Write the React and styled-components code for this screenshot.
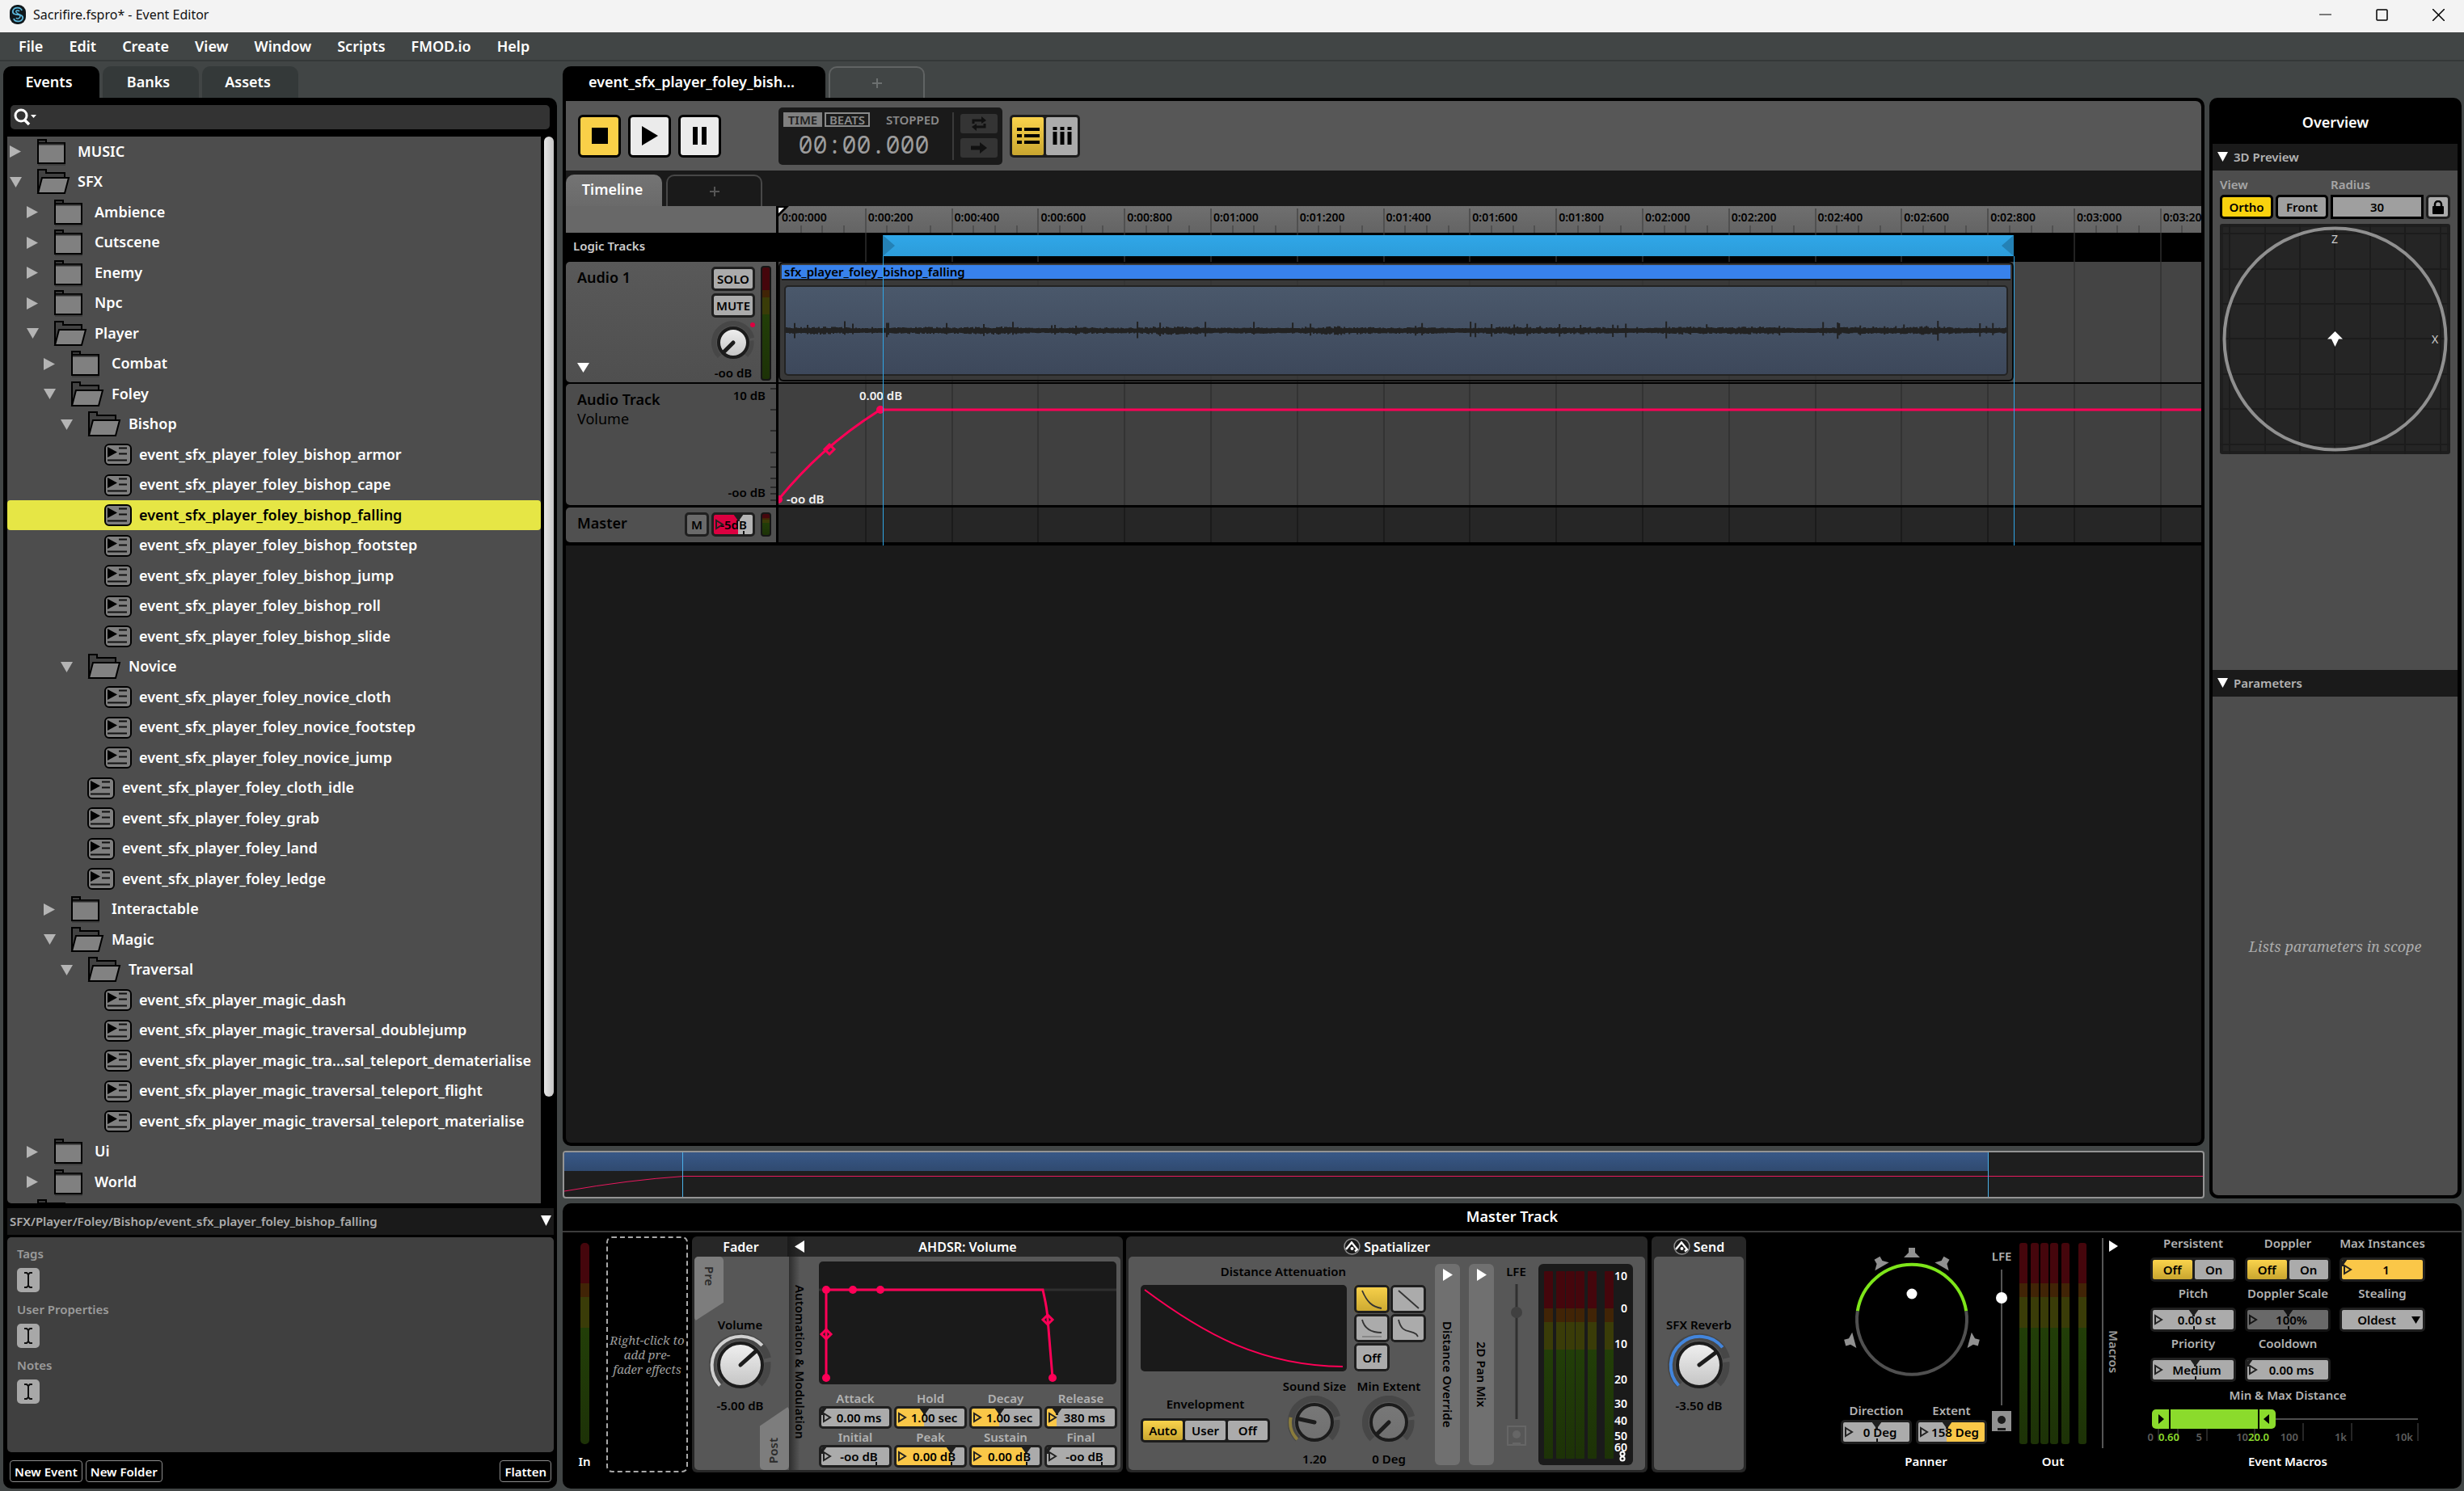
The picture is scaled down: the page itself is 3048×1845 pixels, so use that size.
import React, { useId } from "react";
import styled, { createGlobalStyle, css } from "styled-components";

const sans = `"Noto Sans", "Open Sans", sans-serif`;
const italicSerif = `"Noto Serif", "Droid Serif", "Liberation Serif", serif`;
const mono = `"Droid Sans Mono", "Noto Sans Mono", "Liberation Mono", monospace`;

const c = {
  chrome: "#414545",
  black: "#000",
  well: "#1a1a1a",
  module: "#272727",
  body: "#575757",
  panel: "#4d4d4d",
  key: "#ababab",
  amber: "#fac748",
  pink: "#ff0057",
  blue: "#2fa4e4",
};
const amberKey = "linear-gradient(#fad34c, #c9a62f)";

const Global = createGlobalStyle`
  *, *::before, *::after { box-sizing: border-box; }
  body { margin: 0; background: ${c.chrome}; }
  button, input, select { font: inherit; color: inherit; margin: 0; padding: 0; border: 0; background: none; border-radius: 0; }
  ul { list-style: none; margin: 0; padding: 0; }
  svg { display: block; flex: none; }
  h1, h2, h3, p { margin: 0; font: inherit; }
`;

const Shell = styled.div`
  height: 100vh;
  display: flex;
  flex-direction: column;
  overflow: hidden;
  background: ${c.chrome};
  color: #fff;
  font: 600 18px/24px ${sans};
`;

/* ---------- window chrome ---------- */

const TitleBar = styled.header`
  height: 40px;
  display: flex;
  align-items: center;
  gap: 9px;
  padding: 0 0 4px 12px;
  background: #f3f3f3;
  color: #111;
  font-weight: 400;
  font-size: 16px;
`;
const WindowTitle = styled.h1`flex: 1;`;
const WindowButtons = styled.div`
  display: flex;
  gap: 6px;
`;
const WindowButton = styled.button`
  width: 64px;
  height: 36px;
  display: flex;
  align-items: center;
  justify-content: center;
`;
const MenuBar = styled.nav`
  height: 36px;
  display: flex;
  align-items: center;
  gap: 32px;
  padding-left: 23px;
  border-bottom: 2px solid #343838;
`;
const Workspace = styled.main`
  flex: 1;
  min-height: 0;
  display: flex;
  gap: 7px;
  padding: 6px 3px 3px 4px;
`;

/* ---------- shared parts ---------- */

const Column = styled.div`
  display: flex;
  flex-direction: column;
  min-width: 0;
  min-height: 0;
  flex: ${(p) => (p.$grow ? 1 : "none")};
  width: ${(p) => p.$width || "auto"};
`;
const TabRow = styled.div`
  height: 39px;
  display: flex;
  gap: 4px;
`;
const Tab = styled.button`
  width: ${(p) => p.$width || "119px"};
  padding: 0 6px 2px 0;
  border-radius: 10px 10px 0 0;
  background: ${(p) => (p.$on ? c.black : "#343939")};
`;
const AddTab = styled.button`
  width: 119px;
  border: 2px solid ${(p) => p.$edge || "#606363"};
  border-bottom: 0;
  border-radius: 10px 10px 0 0;
  display: flex;
  align-items: center;
  justify-content: center;
`;
const Panel = styled.section`
  background: ${c.black};
  border-radius: ${(p) => p.$radius || "10px"};
  display: flex;
  flex-direction: column;
  min-height: 0;
  flex: ${(p) => (p.$grow ? 1 : "none")};
`;

/* ---------- browser ---------- */

const SearchBox = styled.label`
  height: 30px;
  margin: 9px;
  padding-left: 4px;
  display: flex;
  align-items: center;
  background: #333;
  border-radius: 5px;
  input { flex: 1; outline: 0; }
`;
const TreeFrame = styled.div`
  flex: 1;
  min-height: 0;
  display: flex;
  gap: 4px;
  padding: 0 4px 0 5px;
`;
const Tree = styled.ul`
  flex: 1;
  overflow: hidden;
  background: ${c.panel};
  border-bottom-left-radius: 5px;
  display: grid;
  grid-auto-rows: 37px 38px;
  align-content: start;
`;
const TreeRow = styled.button`
  width: 100%;
  height: 100%;
  padding-left: ${(p) => 3 + p.$depth * 21}px;
  display: flex;
  align-items: center;
  border-radius: 4px;
  text-align: left;
  white-space: nowrap;
  background: ${(p) => (p.$selected ? "#e6e645" : "none")};
  color: ${(p) => (p.$selected ? "#000" : "#fff")};
`;
const Twisty = styled.span`width: 33px;`;
const IconSlot = styled.span`width: ${(p) => (p.$event ? 43 : 51)}px;`;
const TreeName = styled.span`padding-bottom: 2px;`;
const ScrollTrack = styled.div`width: 12px;`;
const ScrollThumb = styled.div`
  height: 90%;
  border-radius: 6px;
  background: linear-gradient(90deg, #e6e6e6, #c6c6c6);
`;
const PathBar = styled.div`
  height: 33px;
  margin: 6px 4px 3px 5px;
  padding: 0 3px 2px;
  display: flex;
  align-items: center;
  justify-content: space-between;
  background: ${c.well};
  color: #acacac;
  font-size: 15px;
`;
const Properties = styled.div`
  height: 266px;
  margin: 0 4px 0 5px;
  padding: 10px 12px;
  display: flex;
  flex-direction: column;
  align-items: flex-start;
  border-radius: 5px;
  background: #404040;
  color: #9b9b9b;
  font-size: 15px;
  line-height: 20px;
`;
const TextCursorButton = styled.button`
  width: 28px;
  height: 30px;
  margin: 8px 0 11px;
  display: flex;
  align-items: center;
  justify-content: center;
  border-radius: 5px;
  background: #a8a8a8;
`;
const BrowserFooter = styled.div`
  display: flex;
  gap: 4px;
  padding: 10px 7px 8px 8px;
`;
const OutlineButton = styled.button`
  height: 27px;
  padding: 0 5px;
  margin-left: ${(p) => (p.$end ? "auto" : 0)};
  border: 1px solid #8c8c8c;
  border-radius: 4px;
  font-size: 15px;
  line-height: 20px;
`;

/* ---------- transport ---------- */

const Toolbar = styled.div`
  height: 86px;
  padding-left: 15px;
  display: flex;
  align-items: center;
  gap: 9px;
  background: ${c.body};
  border-top-right-radius: 7px;
`;
const Transport = styled.div`
  width: 239px;
  display: flex;
  gap: 9px;
`;
const TransportButton = styled.button`
  width: 53px;
  height: 53px;
  display: flex;
  align-items: center;
  justify-content: center;
  border: 3px solid #000;
  border-radius: 6px;
  background: ${(p) => (p.$on ? "#f9d048" : "#ebebeb")};
`;
const TimeDisplay = styled.div`
  width: 277px;
  height: 71px;
  padding: 6px;
  display: flex;
  gap: 8px;
  border-radius: 5px;
  background: ${c.well};
  color: #8a8a8a;
`;
const TimeMain = styled.div`
  flex: 1;
  display: flex;
  flex-direction: column;
  border-right: 2px solid #3a3a3a;
`;
const TimeModes = styled.div`
  display: flex;
  gap: 3px;
  font-size: 15px;
  line-height: 18px;
`;
const TimeMode = styled.button`
  height: 18px;
  width: ${(p) => (p.$on ? 48 : 56)}px;
  line-height: ${(p) => (p.$on ? 18 : 14)}px;
  border: ${(p) => (p.$on ? 0 : "2px solid #8a8a8a")};
  background: ${(p) => (p.$on ? "#808080" : "none")};
  color: ${(p) => (p.$on ? "#222" : "inherit")};
`;
const TimeState = styled.span`
  flex: 1;
  padding-right: 16px;
  text-align: right;
`;
const Clock = styled.div`
  padding: 6px 10px 0 0;
  text-align: center;
  color: #9c9c9c;
  font: 400 30px/32px ${mono};
`;
const TimeSide = styled.div`
  width: 46px;
  padding: 2px 0;
  display: flex;
  flex-direction: column;
  gap: 6px;
`;
const DimButton = styled.button`
  height: 24px;
  display: flex;
  align-items: center;
  justify-content: center;
  border-radius: 3px;
  background: #343434;
`;

const KeyGroup = styled.div`
  display: grid;
  grid-template-columns: ${(p) => p.$cols};
  grid-auto-rows: ${(p) => p.$rows || "auto"};
  gap: 3px;
  padding: 3px;
  border-radius: 5px;
  background: #1c1c1c;
  color: #000;
  font-size: 15px;
  line-height: 20px;
`;
const Key = styled.button`
  display: flex;
  align-items: center;
  justify-content: center;
  border-radius: 2px;
  background: ${(p) => (p.$on ? amberKey : c.key)};
`;

/* ---------- timeline ---------- */

const EditorInner = styled.div`
  flex: 1;
  min-height: 0;
  display: flex;
  flex-direction: column;
  padding: 4px;
`;
const SheetTabs = styled.div`
  height: 44px;
  padding-top: 5px;
  display: flex;
  gap: 5px;
  background: ${c.well};
`;
const SheetTab = styled.button`
  width: 119px;
  padding: 0 4px 4px 0;
  border-radius: 10px 10px 0 0;
  background: linear-gradient(#747474, #6a6a6a);
`;
const Tracks = styled.div`
  position: relative;
  display: flex;
  flex-direction: column;
`;
const TrackRow = styled.div`
  display: grid;
  grid-template-columns: 260px 1fr;
  column-gap: 3px;
  height: ${(p) => p.$height};
  margin-bottom: ${(p) => p.$gap || 0};
`;
const Lane = styled.div`
  position: relative;
  overflow: ${(p) => (p.$clip ? "hidden" : "visible")};
  background: ${(p) => p.$bg};
`;
const GridLine = styled.i`
  position: absolute;
  top: ${(p) => (p.$minor ? "24px" : p.$inset || 0)};
  bottom: 0;
  width: 2px;
  background: ${(p) => p.$color};
`;
const RulerLabel = styled.span`
  position: absolute;
  top: 4px;
  padding-left: 4px;
  color: #000;
  font-size: 14px;
  line-height: 20px;
`;
const PlayheadMark = styled.svg`
  position: absolute;
  left: 0;
  top: 0;
`;
const RulerHead = styled.div`background: #686868;`;
const TrackHead = styled.div`
  position: relative;
  display: flex;
  justify-content: space-between;
  padding: 0 6px 0 14px;
  background: ${(p) => p.$bg};
  border-radius: 5px 0 0 5px;
  color: #000;
`;
const TrackTitle = styled.div`
  display: flex;
  flex-direction: column;
  justify-content: ${(p) => p.$justify || "flex-start"};
  padding: 7px 0 12px;
`;
const Light = styled.span`font-weight: 400;`;
const LogicHead = styled.div`
  padding: 6px 9px;
  color: #ccc;
  font-size: 15px;
  line-height: 20px;
`;
const HeadControls = styled.div`
  display: flex;
  gap: 7px;
`;
const HeadStack = styled.div`
  width: 54px;
  display: flex;
  flex-direction: column;
  gap: 3px;
  padding-top: 6px;
  color: #000;
  text-align: center;
  font-size: 15px;
  line-height: 20px;
`;
const BoxButton = styled.button`
  height: 30px;
  width: ${(p) => p.$width || "auto"};
  border: 3px solid #1f1f1f;
  border-radius: 5px;
  background: ${(p) => p.$bg || c.key};
  color: #000;
  font-size: 15px;
  line-height: 20px;
  display: flex;
  align-items: center;
  justify-content: center;
`;
const TrackKnob = styled.div`
  position: relative;
  height: 52px;
  padding-top: 1px;
  display: flex;
  justify-content: center;
  input { position: absolute; inset: 0; width: 100%; opacity: 0; }
  &::after {
    content: "";
    position: absolute;
    right: 0;
    top: 3px;
    width: 6px;
    height: 6px;
    border-radius: 50%;
    background: #dc0040;
  }
`;
const MeterSlot = styled.div`
  height: 100%;
  padding: 5px 0 2px;
`;
const MasterControls = styled.div`
  display: grid;
  grid-template-columns: 30px 54px 17px;
  column-gap: 3px;
  padding-top: 6px;
  font-size: 15px;
  justify-items: end;
`;
const Meter = styled.div`
  width: ${(p) => p.$w || "11px"};
  height: ${(p) => p.$h || "100%"};
  border: ${(p) => (p.$framed ? "2px solid #161616" : 0)};
  border-radius: ${(p) => p.$radius || "3px"};
  background: linear-gradient(
    #45060c 0 20%,
    #412406 20% 27%,
    #3a3c08 27% 42%,
    #223e08 42%,
    #1d3207 100%
  );
`;
const DecibelScale = styled.div`
  display: flex;
  flex-direction: column;
  justify-content: space-between;
  padding: 4px 7px 6px 0;
  text-align: right;
  font-size: 15px;
  line-height: 20px;
`;
const ScaleTicks = styled.svg`
  position: absolute;
  right: 0;
  top: 0;
`;

const RegionBar = styled.div`
  position: absolute;
  top: 3px;
  height: 26px;
  display: flex;
  justify-content: space-between;
  background: linear-gradient(#30a7e8, #2c9cda);
`;
const RegionEdge = styled.i`
  position: absolute;
  top: 62px;
  bottom: 0;
  width: 1px;
  background: ${c.blue};
`;
const LaneOverlay = styled.div`
  position: absolute;
  inset: 0 0 0 263px;
  pointer-events: none;
`;
const Clip = styled.div`
  position: relative;
  height: 148px;
  padding: 2px;
  border: 2px solid #080808;
  border-radius: 6px;
  background: rgba(52, 52, 52, 0.7);
`;
const ClipTitle = styled.div`
  height: 19px;
  padding-left: 3px;
  border-bottom: 2px solid #1b1b1b;
  background: #3882ec;
  color: #000;
  font-size: 15px;
  line-height: 17px;
`;
const Wave = styled.div`
  height: 112px;
  margin: 6px 3px 0;
  border: 2px solid #232323;
  border-radius: 5px;
  background: linear-gradient(#4a586b, #3d485b);
  svg { width: 100%; height: 100%; }
`;
const CurveSvg = styled.svg`
  position: absolute;
  inset: 0;
  width: 100%;
  height: 100%;
`;
const PointLabel = styled.span`
  position: absolute;
  left: ${(p) => p.$x};
  top: ${(p) => p.$y};
  font-size: 15px;
  line-height: 16px;
  color: #f2f2f2;
`;
const EmptyTracks = styled.div`
  flex: 1;
  background: ${c.well};
  border-radius: 0 0 6px 6px;
`;
const MiniMap = styled.div`
  height: 59px;
  margin: 6px 0;
  position: relative;
  overflow: hidden;
  border: 2px solid #949494;
  border-radius: 4px;
  background: #1e1e1e;
`;
const MiniClip = styled.div`
  height: 23px;
  background: linear-gradient(#385887, #304a70);
`;
const MiniEdge = styled.i`
  position: absolute;
  top: 0;
  bottom: 0;
  width: 1px;
  background: #4bb0e8;
`;

/* ---------- overview ---------- */

const OverviewColumn = styled.div`
  width: 312px;
  padding: 39px 0 6px;
  display: flex;
  flex-direction: column;
`;
const PanelTitle = styled.h2`
  padding: 18px 0 15px;
  text-align: center;
  line-height: 24px;
`;
const SectionHead = styled.button`
  height: 33px;
  padding: 0 6px 1px;
  display: flex;
  align-items: center;
  gap: 7px;
  background: ${c.well};
  color: #b4b4b4;
  font-size: 15px;
  line-height: 20px;
`;
const OverviewBody = styled.div`
  margin: 0 5px 4px 4px;
  flex: 1;
  display: flex;
  flex-direction: column;
`;
const PreviewArea = styled.div`
  height: 618px;
  padding: 7px 9px;
  background: ${c.panel};
  color: #a6a6a6;
  font-size: 15px;
  line-height: 20px;
`;
const ViewGrid = styled.div`
  display: grid;
  grid-template-columns: 66px 65px 1fr 30px;
  gap: 3px;
  margin-bottom: 6px;
  align-items: center;
`;
const Caption = styled.label`grid-column: ${(p) => p.$col};`;
const SquareButton = styled(BoxButton)`
  border-color: #000;
  background: ${(p) => (p.$on ? "#f9d20e" : "#9f9f9f")};
`;
const RadiusInput = styled.input`
  width: 100%;
  height: 30px;
  border: 3px solid #000;
  background: #9f9f9f;
  color: #000;
  text-align: center;
`;
const EmptyNote = styled.div`
  flex: 1;
  display: flex;
  align-items: center;
  justify-content: center;
  background: ${c.panel};
  border-radius: 0 0 7px 7px;
  color: #ababab;
  font: italic 400 18px/24px ${italicSerif};
`;

/* ---------- effect deck ---------- */

const DeckTitle = styled.h2`
  height: 36px;
  border-bottom: 2px solid #3c3c3c;
  text-align: center;
  line-height: 33px;
`;
const Deck = styled.div`
  display: flex;
  padding: 3px 45px 20px 0;
  height: 317px;
  font-size: 15px;
  line-height: 20px;
`;
const Strip = styled.div`
  width: ${(p) => p.$w};
  margin-left: ${(p) => p.$ml || 0};
  padding-bottom: 4px;
  display: flex;
  flex-direction: column;
  align-items: center;
  justify-content: space-between;
`;
const Meters = styled.div`
  height: 259px;
  padding-top: 10px;
  display: flex;
`;
const MeterPair = styled.div`
  display: flex;
  gap: ${(p) => p.$gap || "3px"};
`;
const DropBox = styled.div`
  width: 101px;
  margin-top: 2px;
  display: flex;
  align-items: center;
  justify-content: center;
  border: 2px dashed #a8a8a8;
  border-radius: 7px;
  color: #9c9c9c;
  text-align: center;
  white-space: nowrap;
  font: italic 400 15px/18px ${italicSerif};
`;
const Module = styled.section`
  width: ${(p) => p.$w};
  margin: 2px 0 0 ${(p) => p.$ml};
  padding: 0 3px 3px;
  display: flex;
  flex-direction: column;
  border-radius: 6px;
  background: ${c.module};
`;
const ModuleHead = styled.h3`
  height: 25px;
  flex: none;
  display: flex;
  align-items: center;
  justify-content: center;
  gap: 4px;
  font-size: 16px;
  width: ${(p) => p.$w || "auto"};
`;
const ModuleHeads = styled.div`
  display: flex;
  height: 25px;
`;
const FoldHead = styled.button`
  width: 38px;
  display: flex;
  align-items: center;
  padding-left: 9px;
  background: linear-gradient(90deg, #1a1a1a, ${c.module} 40%);
`;
const ModuleBody = styled.div`
  flex: 1;
  display: flex;
  border-radius: 5px;
  background: ${c.body};
  color: #000;
`;
const FaderBody = styled.div`
  width: 117px;
  display: grid;
  grid-template-columns: 36px 1fr 36px;
  grid-template-rows: 80px 1fr 79px;
`;
const SlantTag = styled.button`
  grid-row: ${(p) => (p.$post ? 3 : 1)};
  grid-column: ${(p) => (p.$post ? 3 : 1)};
  padding: ${(p) => (p.$post ? "0 4px 8px 0" : "12px 0 0 2px")};
  display: flex;
  align-items: ${(p) => (p.$post ? "flex-end" : "flex-start")};
  justify-content: center;
  border-radius: 5px;
  background: #7d7d7d;
  color: #2b2b2b;
  clip-path: ${(p) =>
    p.$post
      ? "polygon(0 31%, 100% 0, 100% 100%, 0 100%)"
      : "polygon(0 0, 100% 0, 100% 71%, 0 100%)"};
`;
const FaderKnob = styled.div`
  grid-row: 1 / 4;
  grid-column: 1 / 4;
  align-self: start;
  padding-top: 74px;
  margin-right: 4px;
  position: relative;
`;
const SendKnob = styled.div`
  flex: 1;
  padding-top: 74px;
`;
const Vertical = styled.span`
  writing-mode: vertical-rl;
  line-height: 20px;
  white-space: nowrap;
  ${(p) => p.$up && css`transform: rotate(180deg);`}
`;
const ModStrip = styled.div`
  width: 34px;
  display: flex;
  align-items: center;
  background: linear-gradient(90deg, #2e2e2e, ${c.body} 40%);
  padding: 0 0 4px 4px;
`;
const Adsr = styled.div`
  flex: 1;
  padding: 6px 4px 0 3px;
`;
const FieldGrid = styled.div`
  display: grid;
  grid-template-columns: repeat(4, 1fr);
  column-gap: 3px;
  padding-top: 7px;
`;
const FieldBox = styled.div`
  display: flex;
  flex-direction: column;
  gap: ${(p) => p.$gap || 0};
  text-align: center;
  color: #b2b2b2;
`;
const FieldFrame = styled.div`
  position: relative;
  height: ${(p) => p.$h || "28px"};
  display: flex;
  align-items: center;
  border: 3px solid #1f1f1f;
  border-radius: 5px;
  padding-left: 1px;
  opacity: ${(p) => (p.$dim ? 0.6 : 1)};
  background: ${(p) =>
    `linear-gradient(90deg, ${p.$base} ${p.$from}%, ${p.$tint} ${p.$from}% ${p.$to}%, ${p.$base} ${p.$to}%)`};
  color: #000;
  overflow: hidden;
  input {
    position: relative;
    min-width: 0;
    width: 100%;
    padding-left: ${(p) => (p.$tight ? 0 : "8px")};
    text-align: center;
  }
  svg:first-child {
    position: absolute;
    left: 1px;
  }
`;
const Notch = styled.svg`
  position: absolute;
  top: -1px;
  width: 13px;
  margin-left: -6px;
`;
const FieldTick = styled.i`
  position: absolute;
  bottom: 0;
  width: 2px;
  height: 4px;
  background: #111;
`;
const KnobBox = styled.label`
  position: relative;
  display: flex;
  flex-direction: column;
  align-items: center;
  gap: ${(p) => p.$gap || "3px"};
  color: #000;
  input {
    position: absolute;
    inset: 0;
    width: 100%;
    height: 100%;
    opacity: 0;
  }
`;
const SpatialBody = styled.div`
  flex: 1;
  display: flex;
  padding: 8px 15px 4px;
`;
const SpatialMain = styled.div`
  width: 353px;
  margin-right: 11px;
  text-align: center;
`;
const AttenuationRow = styled.div`
  display: flex;
  gap: 9px;
  padding: 7px 0 8px;
  align-items: flex-start;
`;
const AttenuationKeys = styled.div`
  display: grid;
  grid-template-columns: 44px 44px;
  grid-template-rows: 35px 35px 35px;
  gap: 1px;
`;
const CurveKey = styled.button`
  display: flex;
  align-items: center;
  justify-content: center;
  outline: 3px solid #1f1f1f;
  outline-offset: -3px;
  border-radius: 5px;
  background: ${(p) => (p.$on ? amberKey : c.key)};
`;
const EnvelopRow = styled.div`
  display: grid;
  grid-template-columns: 169px 92px 92px;
`;
const Envelopment = styled.div`
  padding: 22px 9px 0 0;
  display: flex;
  flex-direction: column;
  gap: 8px;
`;
const FoldBar = styled.button`
  width: 31px;
  height: 249px;
  margin: 1px ${(p) => (p.$last ? 0 : "11px")} 0 0;
  padding-top: 6px;
  display: flex;
  flex-direction: column;
  align-items: center;
  border-radius: 6px;
  background: #707070;
`;
const FoldText = styled.div`
  flex: 1;
  display: flex;
  align-items: center;
  padding-top: 4px;
`;
const LfeColumn = styled.label`
  position: relative;
  width: ${(p) => p.$w};
  display: flex;
  flex-direction: column;
  align-items: center;
  color: ${(p) => p.$color};
  padding-top: ${(p) => p.$top || 0};
  input {
    position: absolute;
    inset: 20px 0 30px;
    width: 100%;
    opacity: 0;
  }
`;
const MeterWell = styled.div`
  width: 117px;
  height: 249px;
  margin-top: 1px;
  padding: 9px 7px 7px;
  display: flex;
  justify-content: space-between;
  border-radius: 6px;
  background: ${c.well};
`;
const MeterScale = styled.div`
  position: relative;
  width: 20px;
  color: #fff;
  font-size: 14px;
  line-height: 16px;
`;
const ScaleValue = styled.span`
  position: absolute;
  right: 0;
  margin-top: -9px;
`;
const InfinityMark = styled.svg`
  position: absolute;
  right: 1px;
  bottom: -3px;
`;
const PannerRow = styled.div`
  display: flex;
  gap: 6px;
`;
const PannerMain = styled.div`width: 181px;`;
const PannerFields = styled.div`
  display: grid;
  grid-template-columns: 1fr 1fr;
  gap: 5px;
`;
const MacroFold = styled.button`
  width: 26px;
  height: 260px;
  margin: 4px 0 0 18px;
  padding: 3px 0 0 1px;
  display: flex;
  flex-direction: column;
  align-items: center;
  border-left: 2px solid #555;
  color: #9b9b9b;
`;
const Macros = styled.div`
  width: 340px;
  margin-left: 34px;
  padding-bottom: 4px;
  display: flex;
  flex-direction: column;
  text-align: center;
`;
const MacroGrid = styled.div`
  display: grid;
  grid-template-columns: repeat(3, 1fr);
  gap: 4px 11px;
  color: #b2b2b2;
`;
const StealingSelect = styled.span`
  position: relative;
  height: 30px;
  border: 3px solid #1f1f1f;
  border-radius: 5px;
  background: ${c.key};
  color: #000;
  display: flex;
  align-items: center;
  padding-right: 3px;
  select {
    flex: 1;
    min-width: 0;
    appearance: none;
    outline: 0;
    text-align: center;
    text-align-last: center;
  }
`;
const RangeArea = styled.div`
  padding-top: 6px;
  margin-bottom: auto;
  color: #b2b2b2;
`;
const RangeSvg = styled.svg`
  width: 100%;
  margin-top: 8px;
  overflow: visible;
`;
const Legend = styled.div`color: #fff;`;

/* ---------- icons ---------- */

const TriDown = ({ w = 14, h = 12, fill = "#fff" }) => (
  <svg width={w} height={h}><path d={`M0 0H${w}L${w / 2} ${h}Z`} fill={fill} /></svg>
);
const TriRight = ({ w = 12, h = 15, fill = "#fff" }) => (
  <svg width={w} height={h}><path d={`M0 0L${w} ${h / 2}L0 ${h}Z`} fill={fill} /></svg>
);
const TriLeft = () => (
  <svg width="12" height="15"><path d="M12 0V15L0 7.5Z" fill="#fff" /></svg>
);
const Plus = ({ color = "#6c7070" }) => (
  <svg width="12" height="12"><path d="M6 0V12M0 6H12" stroke={color} strokeWidth="2" /></svg>
);
const Folder = () => (
  <svg width="38" height="34" viewBox="0 0 38 34">
    <path d="M2 6V2H12V6" fill="#3a3a3a" stroke="#000" strokeWidth="2" />
    <path d="M2 6H35V31H2Z" fill="#808080" stroke="#000" strokeWidth="2" />
    <path d="M3 7.5H34" stroke="#2c2c2c" strokeWidth="2" />
    <path d="M2 33H36" stroke="#333" />
  </svg>
);
const FolderOpen = () => (
  <svg width="42" height="34" viewBox="0 0 42 34">
    <path d="M2 31V2H12V6H35V12" fill="#424242" stroke="#000" strokeWidth="2" />
    <path d="M7 12H40L35 31H2Z" fill="#828282" stroke="#000" strokeWidth="2" />
  </svg>
);
const EventIcon = () => (
  <svg width="34" height="27" viewBox="0 0 34 27">
    <rect x="1" y="1" width="32" height="25" rx="5" fill="#7f7f7f" stroke="#000" strokeWidth="2" />
    <path d="M4 4V17L16 10.5Z" fill="#000" />
    <path d="M18 5.5H28M18 12.5H28M4 20.5H28" stroke="#111" strokeWidth="2" />
  </svg>
);
const Logo = () => (
  <svg width="20" height="24" viewBox="0 0 20 24">
    <rect width="20" height="24" rx="9" fill="#10181c" />
    <path d="M15 7C14 3 6 2 4 7C3 11 6 12 10 12C14 12 17 14 16 17C14 22 6 21 5 17" fill="none" stroke="#5cb8dc" strokeWidth="1.8" />
    <path d="M12 8C10 6 7 7 8 9C9 11 13 11 13 14C13 17 9 18 8 16" fill="none" stroke="#5cb8dc" strokeWidth="1.5" />
  </svg>
);
const EffectIcon = () => (
  <svg width="21" height="21" viewBox="0 0 21 21">
    <circle cx="10.5" cy="10.5" r="9.5" fill="#1a1a1a" stroke="#8c8c8c" strokeWidth="1.5" />
    <path d="M3 14L10 5.5L17 14L14 16.5" fill="none" stroke="#fff" strokeWidth="2.4" />
    <circle cx="10.5" cy="13" r="2" fill="#fff" />
  </svg>
);
const PlayOutline = () => (
  <svg width="12" height="14"><path d="M2 2V12L10 7Z" fill="none" stroke="#222" strokeWidth="2" /></svg>
);
const NotchShape = () => <path d="M0 0H13L8 7V9H5V7Z" fill="#1f1f1f" />;
const LfeIcon = ({ box, dot, outlined }) => (
  <svg width="24" height="25">
    <rect x="1" y="1" width="22" height="23" fill={outlined ? "none" : box} stroke={box} strokeWidth="2" />
    <circle cx="12" cy="11" r="5" fill={dot} />
    <path d="M7 22.5H17" stroke={dot} strokeWidth="3" />
  </svg>
);

/* ---------- small composites ---------- */

const polar = (cx, cy, r, deg) => {
  const a = ((deg - 90) * Math.PI) / 180;
  return `${(cx + r * Math.cos(a)).toFixed(1)} ${(cy + r * Math.sin(a)).toFixed(1)}`;
};
const arc = (cx, cy, r, from, to) =>
  `M${polar(cx, cy, r, from)}A${r} ${r} 0 ${to - from > 180 ? 1 : 0} 1 ${polar(cx, cy, r, to)}`;

function Dial({ r, track, angle, tint, flat }) {
  const s = (r + track + 3) * 2;
  const m = s / 2;
  const id = useId();
  return (
    <svg width={s} height={s}>
      <defs>
        <linearGradient id={id} x2="0" y2="1">
          <stop offset="0" stopColor={flat ? "#787878" : "#f0f0f0"} />
          <stop offset="1" stopColor={flat ? "#707070" : "#c4c4c4"} />
        </linearGradient>
      </defs>
      <path d={arc(m, m, r + 3 + track / 2, -135, 76)} fill="none" stroke="#474747" strokeWidth={track} />
      <path d={arc(m, m, r + 2 + track / 2, 84, 135)} fill="none" stroke="#474747" strokeWidth={track - 1} />
      {tint && <path d={arc(m, m, r + track, -135, angle)} fill="none" stroke={tint} strokeWidth="4" />}
      <circle cx={m} cy={m} r={r} fill={`url(#${id})`} stroke="#1c1c1c" strokeWidth="4" />
      <path d={`M${m} ${m}L${polar(m, m, r - 2, angle)}`} stroke="#1c1c1c" strokeWidth="5" strokeLinecap="round" />
    </svg>
  );
}

function Knob({ label, value, gap, ...dial }) {
  return (
    <KnobBox $gap={gap}>
      <span>{label}</span>
      <Dial {...dial} />
      <span>{value}</span>
      <input type="range" min="-135" max="135" defaultValue={dial.angle} aria-label={label} />
    </KnobBox>
  );
}

function Field({ label, value, from = 0, to = 0, notch, tick, gap, h, dim }) {
  const id = useId();
  return (
    <FieldBox $gap={gap}>
      <label htmlFor={id}>{label}</label>
      <FieldFrame $from={from} $to={to} $h={h} $base={dim ? "#b0b0b0" : c.key} $tint={c.amber} $dim={dim}>
        <PlayOutline />
        {notch !== undefined && (
          <Notch height="9" viewBox="0 0 13 9" style={{ left: `${notch}%` }}><NotchShape /></Notch>
        )}
        {tick !== undefined && <FieldTick style={{ left: `${tick}%` }} />}
        <input id={id} defaultValue={value} />
      </FieldFrame>
    </FieldBox>
  );
}

function OffOn({ label }) {
  return (
    <FieldBox $gap="8px">
      <span>{label}</span>
      <KeyGroup $cols="1fr 1fr" $rows="24px">
        <Key $on aria-pressed="true">Off</Key>
        <Key aria-pressed="false">On</Key>
      </KeyGroup>
    </FieldBox>
  );
}

/* ---------- browser data ---------- */

const tree = [
  [0, "closed", "MUSIC"],
  [0, "open", "SFX"],
  [1, "closed", "Ambience"],
  [1, "closed", "Cutscene"],
  [1, "closed", "Enemy"],
  [1, "closed", "Npc"],
  [1, "open", "Player"],
  [2, "closed", "Combat"],
  [2, "open", "Foley"],
  [3, "open", "Bishop"],
  [4, "event", "event_sfx_player_foley_bishop_armor"],
  [4, "event", "event_sfx_player_foley_bishop_cape"],
  [4, "event", "event_sfx_player_foley_bishop_falling"],
  [4, "event", "event_sfx_player_foley_bishop_footstep"],
  [4, "event", "event_sfx_player_foley_bishop_jump"],
  [4, "event", "event_sfx_player_foley_bishop_roll"],
  [4, "event", "event_sfx_player_foley_bishop_slide"],
  [3, "open", "Novice"],
  [4, "event", "event_sfx_player_foley_novice_cloth"],
  [4, "event", "event_sfx_player_foley_novice_footstep"],
  [4, "event", "event_sfx_player_foley_novice_jump"],
  [3, "event", "event_sfx_player_foley_cloth_idle"],
  [3, "event", "event_sfx_player_foley_grab"],
  [3, "event", "event_sfx_player_foley_land"],
  [3, "event", "event_sfx_player_foley_ledge"],
  [2, "closed", "Interactable"],
  [2, "open", "Magic"],
  [3, "open", "Traversal"],
  [4, "event", "event_sfx_player_magic_dash"],
  [4, "event", "event_sfx_player_magic_traversal_doublejump"],
  [4, "event", "event_sfx_player_magic_tra...sal_teleport_dematerialise"],
  [4, "event", "event_sfx_player_magic_traversal_teleport_flight"],
  [4, "event", "event_sfx_player_magic_traversal_teleport_materialise"],
  [1, "closed", "Ui"],
  [1, "closed", "World"],
  [0, "partial", ""],
];

function Browser() {
  return (
    <Column $width="685px">
      <TabRow>
        <Tab $on>Events</Tab>
        <Tab>Banks</Tab>
        <Tab>Assets</Tab>
      </TabRow>
      <Panel $grow $radius="0 10px 10px 10px">
        <SearchBox>
          <svg width="30" height="24" viewBox="0 0 30 24">
            <circle cx="9" cy="10" r="7" fill="none" stroke="#fff" strokeWidth="3" />
            <path d="M13 15L19 21" stroke="#fff" strokeWidth="3.5" />
            <path d="M21 9H28L24.5 13Z" fill="#fff" />
          </svg>
          <input type="text" aria-label="Search events" />
        </SearchBox>
        <TreeFrame>
          <Tree>
            {tree.map(([depth, kind, name], i) => (
              <li key={i}>
                <TreeRow $depth={depth} $selected={name === "event_sfx_player_foley_bishop_falling"} aria-label={name || "More"}>
                  <Twisty>
                    {kind === "closed" && <TriRight w={14} h={15} fill="#b4b4b4" />}
                    {kind === "open" && <TriDown w={15} h={13} fill="#b4b4b4" />}
                  </Twisty>
                  <IconSlot $event={kind === "event"}>
                    {kind === "event" ? <EventIcon /> : kind === "open" ? <FolderOpen /> : <Folder />}
                  </IconSlot>
                  <TreeName>{name}</TreeName>
                </TreeRow>
              </li>
            ))}
          </Tree>
          <ScrollTrack><ScrollThumb /></ScrollTrack>
        </TreeFrame>
        <PathBar>
          <span>SFX/Player/Foley/Bishop/event_sfx_player_foley_bishop_falling</span>
          <TriDown w={13} h={13} />
        </PathBar>
        <Properties>
          {["Tags", "User Properties", "Notes"].map((t) => (
            <React.Fragment key={t}>
              <span>{t}</span>
              <TextCursorButton aria-label={`Edit ${t}`}>
                <svg width="12" height="20">
                  <path d="M1 1H4L6 3L8 1H11M1 19H4L6 17L8 19H11M6 2V18" fill="none" stroke="#111" strokeWidth="2" />
                </svg>
              </TextCursorButton>
            </React.Fragment>
          ))}
        </Properties>
        <BrowserFooter>
          <OutlineButton>New Event</OutlineButton>
          <OutlineButton>New Folder</OutlineButton>
          <OutlineButton $end>Flatten</OutlineButton>
        </BrowserFooter>
      </Panel>
    </Column>
  );
}

/* ---------- timeline ---------- */

const span = 3296;
const at = (ms) => `${(ms / span) * 100}%`;
const region = { from: 241, to: 2862 };
const mini = { from: "7.2%", to: "86.9%" };
const majors = Array.from({ length: 17 }, (_, i) => i * 200);
const stamp = (ms) => `0:${String(Math.floor(ms / 1000)).padStart(2, "0")}:${String(ms % 1000).padStart(3, "0")}`;

const GridLines = ({ color }) =>
  majors.slice(1).map((ms) => <GridLine key={ms} $color={color} style={{ left: at(ms) }} />);

const wavePath = (() => {
  let seed = 7;
  const rnd = () => (seed = (seed * 16807) % 2147483647) / 2147483647;
  let d = "";
  for (let x = 0; x < 1510; x += 2) {
    const swell = 1 + 0.8 * Math.sin(x / 61) * Math.sin(x / 23);
    const spike = rnd() > 0.92 ? rnd() * 8 : 0;
    const up = 2.6 + rnd() * 1.6 * swell + spike;
    const down = 2.6 + rnd() * 1.6 * swell + spike * rnd();
    d += `M${x} ${(54 - up).toFixed(1)}h2V${(54 + down).toFixed(1)}h-2Z`;
  }
  return d;
})();

function Editor() {
  return (
    <Column $grow>
      <TabRow>
        <Tab $on $width="325px">event_sfx_player_foley_bish...</Tab>
        <AddTab aria-label="New tab"><Plus /></AddTab>
      </TabRow>
      <Panel $grow $radius="0 10px 10px 10px">
        <EditorInner>
          <Toolbar>
            <Transport>
              <TransportButton $on aria-label="Stop"><svg width="20" height="20"><path d="M0 0H20V20H0Z" /></svg></TransportButton>
              <TransportButton aria-label="Play"><TriRight w={20} h={24} fill="#000" /></TransportButton>
              <TransportButton aria-label="Pause"><svg width="18" height="22"><path d="M0 0H6V22H0ZM11 0H17V22H11Z" /></svg></TransportButton>
            </Transport>
            <TimeDisplay>
              <TimeMain>
                <TimeModes>
                  <TimeMode $on>TIME</TimeMode>
                  <TimeMode>BEATS</TimeMode>
                  <TimeState>STOPPED</TimeState>
                </TimeModes>
                <Clock>00:00.000</Clock>
              </TimeMain>
              <TimeSide>
                <DimButton aria-label="Loop">
                  <svg width="18" height="18" viewBox="0 0 18 18">
                    <path d="M2 9V5H13M16 9V13H5" fill="none" stroke="#111" strokeWidth="3" />
                    <path d="M12 0L18 5L12 9ZM6 9L0 13L6 18Z" fill="#111" />
                  </svg>
                </DimButton>
                <DimButton aria-label="Follow playback">
                  <svg width="20" height="14"><path d="M0 4.5H11V0L20 7L11 14V9.5H0Z" fill="#111" /></svg>
                </DimButton>
              </TimeSide>
            </TimeDisplay>
            <KeyGroup $cols="39px 39px" $rows="47px">
              <Key $on aria-label="List view">
                <svg width="28" height="20"><path d="M0 2H6M9 2H28M0 10H6M9 10H28M0 18H6M9 18H28" stroke="#000" strokeWidth="4" /></svg>
              </Key>
              <Key aria-label="Mixer view">
                <svg width="24" height="22"><path d="M3 0V4M3 6V22M12 0V4M12 6V22M21 0V4M21 6V22" stroke="#000" strokeWidth="5" /></svg>
              </Key>
            </KeyGroup>
          </Toolbar>
          <SheetTabs>
            <SheetTab>Timeline</SheetTab>
            <AddTab $edge="#474747" aria-label="New sheet"><Plus color="#555" /></AddTab>
          </SheetTabs>
          <Tracks>
            <TrackRow $height="33px">
              <RulerHead />
              <Lane $clip $bg="linear-gradient(#6f6f6f, #646464)">
                {majors.map((ms) => (
                  <React.Fragment key={ms}>
                    {ms > 0 && <GridLine $color="#505050" $inset="3px" style={{ left: at(ms) }} />}
                    {[50, 100, 150].map((m) => (
                      <GridLine key={m} $minor $color="#505050" style={{ left: at(ms + m) }} />
                    ))}
                    <RulerLabel style={{ left: at(ms) }}>{stamp(ms)}</RulerLabel>
                  </React.Fragment>
                ))}
                <PlayheadMark width="13" height="14">
                  <path d="M0 0H13L0 13Z" fill="#000" />
                  <path d="M0 2H7L0 9Z" fill="#fff" />
                </PlayheadMark>
              </Lane>
            </TrackRow>
            <TrackRow $height="36px">
              <LogicHead>Logic Tracks</LogicHead>
              <Lane $bg="#000">
                <GridLines color="#222" />
                <RegionBar style={{ left: at(region.from), width: at(region.to - region.from) }}>
                  <svg width="15" height="26"><path d="M0 0L15 13L0 26Z" fill="#2481b5" /></svg>
                  <svg width="15" height="26"><path d="M15 0L0 13L15 26Z" fill="#2481b5" /></svg>
                </RegionBar>
              </Lane>
            </TrackRow>
            <TrackRow $height="149px" $gap="2px">
              <TrackHead $bg="linear-gradient(#595959, #4f4f4f)">
                <TrackTitle $justify="space-between">
                  Audio 1
                  <TriDown w={15} h={12} />
                </TrackTitle>
                <HeadControls>
                  <HeadStack>
                    <BoxButton>SOLO</BoxButton>
                    <BoxButton>MUTE</BoxButton>
                    <TrackKnob>
                      <Dial r={18} track={6} angle={-135} />
                      <input type="range" aria-label="Audio 1 volume" />
                    </TrackKnob>
                    <span>-oo dB</span>
                  </HeadStack>
                  <MeterSlot><Meter $framed $w="13px" $radius="4px" /></MeterSlot>
                </HeadControls>
              </TrackHead>
              <Lane $bg="#444">
                <GridLines color="#363636" />
                <Clip style={{ width: at(region.to) }}>
                  <ClipTitle>sfx_player_foley_bishop_falling</ClipTitle>
                  <Wave>
                    <svg viewBox="0 0 1510 108" preserveAspectRatio="none"><path d={wavePath} fill="#222" /></svg>
                  </Wave>
                </Clip>
              </Lane>
            </TrackRow>
            <TrackRow $height="150px" $gap="3px">
              <TrackHead $bg="#4c4c4c">
                <TrackTitle>
                  Audio Track
                  <Light>Volume</Light>
                </TrackTitle>
                <DecibelScale>
                  <span>10 dB</span>
                  <span>-oo dB</span>
                </DecibelScale>
                <ScaleTicks width="7" height="150">
                  <path d="M0 6H7M0 32H7M0 58H7M0 85H7M0 103H7M0 117H7M0 128H7M0 136H7M0 144H7" stroke="#2a2a2a" strokeWidth="2" />
                </ScaleTicks>
              </TrackHead>
              <Lane $bg="#404040">
                <GridLines color="#333" />
                <CurveSvg>
                  <path d="M0 143C34 102 72 66 126 32" fill="none" stroke={c.pink} strokeWidth="3" />
                  <line x1="126" y1="32" x2="100%" y2="32" stroke={c.pink} strokeWidth="3" />
                  <circle cx="0" cy="143" r="5" fill={c.pink} />
                  <circle cx="126" cy="32" r="5" fill={c.pink} />
                  <path d="M63 75L69 81L63 87L57 81Z" fill="none" stroke={c.pink} strokeWidth="3" />
                </CurveSvg>
                <PointLabel $x="100px" $y="6px">0.00 dB</PointLabel>
                <PointLabel $x="10px" $y="134px">-oo dB</PointLabel>
              </Lane>
            </TrackRow>
            <TrackRow $height="42px" $gap="5px">
              <TrackHead $bg="#505050">
                <TrackTitle>Master</TrackTitle>
                <MasterControls>
                  <BoxButton $width="30px" $bg="#6a6a6a">M</BoxButton>
                  <FieldFrame $tight $h="30px" $base="#b4b4b4" $tint="#dc0040" $from={0} $to={62}>
                    <PlayOutline />
                    <Notch height="9" viewBox="0 0 13 9" style={{ left: "62%" }}><NotchShape /></Notch>
                    <FieldTick style={{ left: "76%" }} />
                    <input aria-label="Master volume" defaultValue="-5dB" />
                  </FieldFrame>
                  <Meter $framed $w="13px" $h="30px" $radius="4px" />
                </MasterControls>
              </TrackHead>
              <Lane $bg="#262626"><GridLines color="#1b1b1b" /></Lane>
            </TrackRow>
            <LaneOverlay>
              <RegionEdge style={{ left: at(region.from) }} />
              <RegionEdge style={{ left: at(region.to) }} />
            </LaneOverlay>
          </Tracks>
          <EmptyTracks />
        </EditorInner>
      </Panel>
      <MiniMap>
        <MiniClip style={{ width: mini.to }} />
        <CurveSvg>
          <path d="M0 48Q80 34 148 29.5" fill="none" stroke="#e8195f" />
          <line x1="148" y1="29.5" x2="100%" y2="29.5" stroke="#e8195f" />
        </CurveSvg>
        <MiniEdge style={{ left: mini.from }} />
        <MiniEdge style={{ left: mini.to }} />
      </MiniMap>
    </Column>
  );
}

/* ---------- overview panel ---------- */

function Overview() {
  const id = useId();
  const steps = [12, 56, 99, 142, 186, 229, 273];
  return (
    <OverviewColumn>
      <Panel $grow>
        <PanelTitle>Overview</PanelTitle>
        <OverviewBody>
          <SectionHead><TriDown w={13} /> 3D Preview</SectionHead>
          <PreviewArea>
            <ViewGrid>
              <Caption as="span" $col="1 / 3">View</Caption>
              <Caption htmlFor={id} $col="3 / 5">Radius</Caption>
              <SquareButton $on>Ortho</SquareButton>
              <SquareButton>Front</SquareButton>
              <RadiusInput id={id} defaultValue="30" />
              <BoxButton aria-label="Lock radius">
                <svg width="14" height="17" viewBox="0 0 14 17">
                  <path d="M3 8V5A4 4 0 0 1 11 5V8" fill="none" stroke="#000" strokeWidth="2.5" />
                  <rect y="7" width="14" height="10" rx="1" fill="#000" />
                </svg>
              </BoxButton>
            </ViewGrid>
            <svg width="285" height="285">
              <rect width="285" height="285" rx="3" fill="#1e1e1e" />
              <rect x="4" y="4" width="277" height="277" fill="#252525" />
              {steps.map((s) => (
                <path key={s} d={`M${s} 0V285M0 ${s}H285`} stroke="#1c1c1c" strokeWidth="2" />
              ))}
              <circle cx="142.5" cy="142.5" r="137" fill="none" stroke="#909090" strokeWidth="4" />
              <path d="M142.5 133L152 142.5H147L142.5 152L138 142.5H133Z" fill="#fff" />
              <g fill="#ccc" fontSize="14" fontWeight="400" textAnchor="middle">
                <text x="142" y="24">Z</text>
                <text x="266" y="148">X</text>
              </g>
            </svg>
          </PreviewArea>
          <SectionHead><TriDown w={13} /> Parameters</SectionHead>
          <EmptyNote>Lists parameters in scope</EmptyNote>
        </OverviewBody>
      </Panel>
    </OverviewColumn>
  );
}

/* ---------- deck ---------- */

function SixMeters({ h, w = "10px", radius, wide }) {
  const one = <Meter $w={w} $h={h} $radius={radius} />;
  return (
    <MeterPair $gap={wide ? "10px" : "11px"}>
      <MeterPair $gap="4px">
        {one}
        <MeterPair $gap={wide ? "1px" : "2px"}>{one}{one}{one}</MeterPair>
        {one}
      </MeterPair>
      {one}
    </MeterPair>
  );
}

function FaderModule() {
  return (
    <Module $w="533px" $ml="5px">
      <ModuleHeads>
        <ModuleHead $w="115px">Fader</ModuleHead>
        <FoldHead aria-label="Collapse modulation"><TriLeft /></FoldHead>
        <ModuleHead $w="370px">AHDSR: Volume</ModuleHead>
      </ModuleHeads>
      <ModuleBody>
        <FaderBody>
          <FaderKnob>
            <Knob label="Volume" value="-5.00 dB" r={27} track={9} angle={48} tint="#d0d0d0" gap="1px" />
          </FaderKnob>
          <SlantTag><Vertical>Pre</Vertical></SlantTag>
          <SlantTag $post><Vertical $up>Post</Vertical></SlantTag>
        </FaderBody>
        <ModStrip><Vertical>Automation &amp; Modulation</Vertical></ModStrip>
        <Adsr>
          <svg width="368" height="152">
            <rect width="368" height="152" rx="5" fill={c.well} />
            <path d="M0 35H368" stroke="#2e2e2e" strokeWidth="3" />
            <path d="M9 144V35H277C279 45 282 55 283 71L289 144" fill="none" stroke={c.pink} strokeWidth="3" />
            {[[9, 35], [42, 35], [76, 35], [9, 144], [289, 144]].map(([x, y]) => (
              <circle key={`${x}-${y}`} cx={x} cy={y} r="5" fill={c.pink} />
            ))}
            <path d="M9 84L15 90L9 96L3 90Z M283 66L289 72L283 78L277 72Z" fill="none" stroke={c.pink} strokeWidth="3" />
          </svg>
          <FieldGrid>
            <Field label="Attack" value="0.00 ms" notch={0} />
            <Field label="Hold" value="1.00 sec" to={40} notch={40} />
            <Field label="Decay" value="1.00 sec" to={40} notch={40} />
            <Field label="Release" value="380 ms" to={14} notch={14} />
            <Field label="Initial" value="-oo dB" notch={0} tick={80} />
            <Field label="Peak" value="0.00 dB" to={80} notch={80} tick={80} />
            <Field label="Sustain" value="0.00 dB" to={80} notch={80} tick={80} />
            <Field label="Final" value="-oo dB" notch={0} tick={80} />
          </FieldGrid>
        </Adsr>
      </ModuleBody>
    </Module>
  );
}

const curveIcons = ["M6 4C12 18 18 24 30 26", "M6 4L31 26", "M6 4C9 16 18 20 30 20", "M6 4C10 22 20 16 28 22L30 25"];

function Spatializer() {
  const scale = [[3, "10"], [20, "0"], [39, "10"], [58, "20"], [71, "30"], [80, "40"], [88, "50"], [94, "60"]];
  return (
    <Module $w="645px" $ml="4px">
      <ModuleHead><EffectIcon />Spatializer</ModuleHead>
      <ModuleBody>
        <SpatialBody>
          <SpatialMain>
            <div>Distance Attenuation</div>
            <AttenuationRow>
              <svg width="255" height="107">
                <rect width="255" height="107" rx="5" fill={c.well} />
                <path d="M5 6C80 62 150 100 250 101" fill="none" stroke={c.pink} strokeWidth="2" />
              </svg>
              <AttenuationKeys>
                {curveIcons.map((d, i) => (
                  <CurveKey key={d} $on={i === 0} aria-label={`Curve ${i + 1}`}>
                    <svg width="36" height="30"><path d={d} fill="none" stroke="#333" strokeWidth="1.8" />{i === 2 && <path d="M6 25H30" stroke="#888" strokeWidth="2" />}</svg>
                  </CurveKey>
                ))}
                <CurveKey>Off</CurveKey>
              </AttenuationKeys>
            </AttenuationRow>
            <EnvelopRow>
              <Envelopment>
                <span>Envelopment</span>
                <KeyGroup $cols="1fr 1fr 1fr" $rows="24px">
                  <Key $on>Auto</Key>
                  <Key>User</Key>
                  <Key>Off</Key>
                </KeyGroup>
              </Envelopment>
              <Knob label="Sound Size" value="1.20" r={22} track={8} angle={-78} tint="#8a7c3c" flat gap="2px" />
              <Knob label="Min Extent" value="0 Deg" r={22} track={8} angle={-135} flat gap="2px" />
            </EnvelopRow>
          </SpatialMain>
          <FoldBar><TriRight /><FoldText><Vertical>Distance Override</Vertical></FoldText></FoldBar>
          <FoldBar $last><TriRight /><FoldText><Vertical>2D Pan Mix</Vertical></FoldText></FoldBar>
          <LfeColumn $w="55px" $color="#000">
            LFE
            <svg width="24" height="181">
              <path d="M12 6V173" stroke="#303030" strokeWidth="3" />
              <circle cx="12" cy="41" r="7" fill="#404040" />
            </svg>
            <LfeIcon box="#666" dot="#666" outlined />
            <input type="range" aria-label="LFE" />
          </LfeColumn>
          <MeterWell>
            <SixMeters h="232px" w="11px" radius="1px" wide />
            <MeterScale>
              {scale.map(([top, label], i) => (
                <ScaleValue key={i} style={{ top: `${top}%` }}>{label}</ScaleValue>
              ))}
              <InfinityMark width="10" height="14" viewBox="0 0 10 14">
                <circle cx="5" cy="4" r="2.6" fill="none" stroke="#fff" strokeWidth="2" />
                <circle cx="5" cy="10" r="2.6" fill="none" stroke="#fff" strokeWidth="2" />
              </InfinityMark>
            </MeterScale>
          </MeterWell>
        </SpatialBody>
      </ModuleBody>
    </Module>
  );
}

const Speaker = ({ x, y, rot }) => (
  <path transform={`translate(${x} ${y}) rotate(${rot})`} d="M-4 -6H4V0L10 6H-10L-4 0Z" fill="#919191" />
);

function Panner() {
  return (
    <Strip $w="211px" $ml="auto">
      <PannerRow>
        <PannerMain>
          <svg width="181" height="207">
            <path d={arc(88, 105, 68, -81, 81)} fill="none" stroke="#7ee61a" strokeWidth="4" />
            <path d={arc(88, 105, 68, 81, 279)} fill="none" stroke="#505050" strokeWidth="4" />
            <circle cx="88" cy="73" r="6.5" fill="#fff" />
            <Speaker x={88} y={22} rot={0} />
            <Speaker x={48} y={34} rot={-30} />
            <Speaker x={128} y={34} rot={30} />
            <Speaker x={11} y={132} rot={-105} />
            <Speaker x={165} y={132} rot={105} />
          </svg>
          <PannerFields>
            <Field label="Direction" value="0 Deg" notch={50} tick={50} h="30px" gap="2px" />
            <Field label="Extent" value="158 Deg" from={43} to={100} notch={43} h="30px" gap="2px" />
          </PannerFields>
        </PannerMain>
        <LfeColumn $w="24px" $color="#b2b2b2" $top="16px">
          LFE
          <svg width="24" height="182">
            <path d="M12 7V175" stroke="#555" strokeWidth="2" />
            <circle cx="12" cy="42" r="7" fill="#fff" />
          </svg>
          <LfeIcon box="#919191" dot="#1a1a1a" />
          <input type="range" aria-label="Output LFE" />
        </LfeColumn>
      </PannerRow>
      <Legend>Panner</Legend>
    </Strip>
  );
}

function MinMaxDistance() {
  const ticks = [[10, "0"], [34, ""], [70, "5"], [129, "10"], [189, "100"], [249, "1k"], [331, "10k"]];
  return (
    <RangeArea>
      <div>Min &amp; Max Distance</div>
      <RangeSvg height="44">
        <path d="M155 12H331" stroke="#4d4d4d" strokeWidth="2" />
        {ticks.map(([x]) => (
          <path key={x} d={`M${x} 17V39`} stroke="#4d4d4d" />
        ))}
        <rect x="2" y="0" width="153" height="24" rx="5" fill="#8bdb2c" />
        <path d="M24 0V24M134 0V24" stroke="#000" strokeWidth="2" />
        <path d="M10 6V18L17 12ZM147 6V18L140 12Z" fill="#000" />
        <g fontSize="13" fill="#5c5c5c" textAnchor="end">
          {ticks.filter(([, t]) => t).map(([x, t]) => (
            <text key={x} x={t === "10" ? 121 : x - 6} y="39">{t}</text>
          ))}
          <text x="36" y="39" fill="#8bdb2c">0.60</text>
          <text x="147" y="39" fill="#8bdb2c">20.0</text>
        </g>
      </RangeSvg>
    </RangeArea>
  );
}

function MacroPanel() {
  const id = useId();
  return (
    <Macros>
      <MacroGrid>
        <OffOn label="Persistent" />
        <OffOn label="Doppler" />
        <Field label="Max Instances" value="1" to={100} h="30px" gap="8px" notch={0} />
        <Field label="Pitch" value="0.00 st" h="30px" gap="8px" notch={50} tick={50} />
        <Field label="Doppler Scale" value="100%" h="30px" gap="8px" notch={50} tick={50} dim />
        <FieldBox $gap="8px">
          <label htmlFor={id}>Stealing</label>
          <StealingSelect>
            <select id={id} defaultValue="Oldest"><option>Oldest</option></select>
            <TriDown w={11} h={9} fill="#000" />
          </StealingSelect>
        </FieldBox>
        <Field label="Priority" value="Medium" h="30px" gap="8px" notch={52} tick={52} />
        <Field label="Cooldown" value="0.00 ms" h="30px" gap="8px" notch={0} />
      </MacroGrid>
      <MinMaxDistance />
      <Legend>Event Macros</Legend>
    </Macros>
  );
}

function EffectDeck() {
  return (
    <Panel>
      <DeckTitle>Master Track</DeckTitle>
      <Deck>
        <Strip $w="54px">
          <Meters><Meter $radius="5px" /></Meters>
          <Legend>In</Legend>
        </Strip>
        <DropBox>
          <p>Right-click to<br />add pre-<br />fader effects</p>
        </DropBox>
        <FaderModule />
        <Spatializer />
        <Module $w="117px" $ml="5px">
          <ModuleHead><EffectIcon />Send</ModuleHead>
          <ModuleBody>
            <SendKnob>
              <Knob label="SFX Reverb" value="-3.50 dB" r={27} track={9} angle={53} tint="#4285dc" gap="1px" />
            </SendKnob>
          </ModuleBody>
        </Module>
        <Panner />
        <Strip $w="85px" $ml="9px">
          <Meters><SixMeters h="249px" radius="3px" /></Meters>
          <Legend>Out</Legend>
        </Strip>
        <MacroFold>
          <TriRight w={11} h={14} />
          <FoldText><Vertical>Macros</Vertical></FoldText>
        </MacroFold>
        <MacroPanel />
      </Deck>
    </Panel>
  );
}

const Right = styled.div`
  flex: 1;
  min-width: 0;
  display: flex;
  flex-direction: column;
`;
const Upper = styled.div`
  flex: 1;
  min-height: 0;
  display: flex;
  gap: 6px;
`;

export default function App() {
  return (
    <Shell>
      <Global />
      <TitleBar>
        <Logo />
        <WindowTitle>Sacrifire.fspro* - Event Editor</WindowTitle>
        <WindowButtons>
          <WindowButton aria-label="Minimize"><svg width="15" height="2"><path d="M0 1H15" stroke="#000" /></svg></WindowButton>
          <WindowButton aria-label="Maximize"><svg width="15" height="15"><rect x="1" y="1" width="13" height="13" rx="1" fill="none" stroke="#000" strokeWidth="1.5" /></svg></WindowButton>
          <WindowButton aria-label="Close"><svg width="15" height="15"><path d="M0 0L15 15M15 0L0 15" stroke="#000" strokeWidth="1.5" /></svg></WindowButton>
        </WindowButtons>
      </TitleBar>
      <MenuBar>
        {["File", "Edit", "Create", "View", "Window", "Scripts", "FMOD.io", "Help"].map((m) => (
          <button key={m}>{m}</button>
        ))}
      </MenuBar>
      <Workspace>
        <Browser />
        <Right>
          <Upper>
            <Editor />
            <Overview />
          </Upper>
          <EffectDeck />
        </Right>
      </Workspace>
    </Shell>
  );
}
